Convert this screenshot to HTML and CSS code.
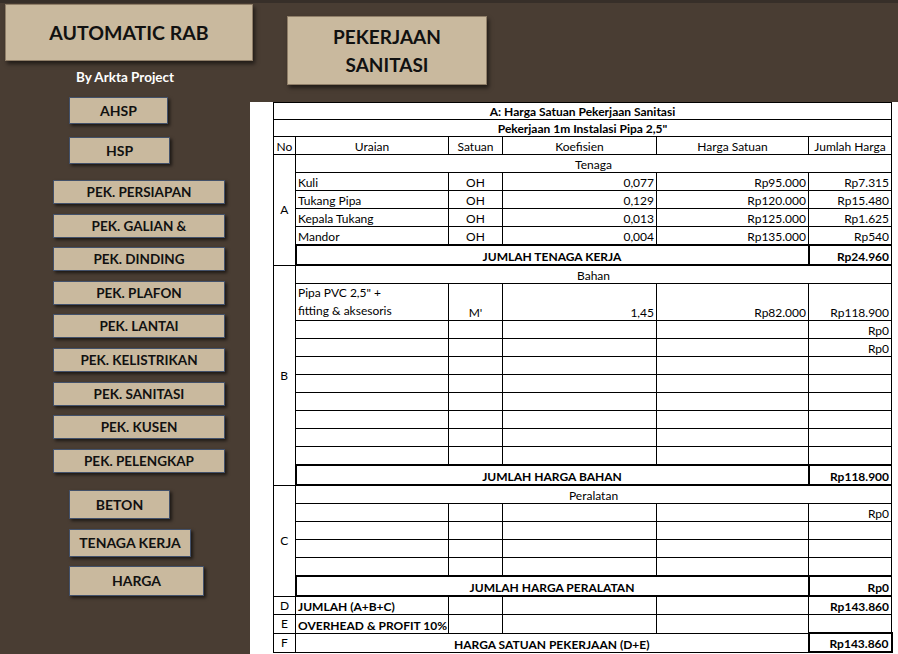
FILE: index.html
```html
<!DOCTYPE html>
<html>
<head>
    <title>Automatic RAB - Pekerjaan Sanitasi</title>
    <link rel="stylesheet" href="styles.css">
</head>
<body>
<div class="app">
    <aside class="sidebar">
        <div class="brand">AUTOMATIC RAB</div>
        <div class="byline">By Arkta Project</div>

        <nav class="menu">
            <div class="group group-data">
                <a class="btn btn-ahsp">AHSP</a>
                <a class="btn btn-hsp">HSP</a>
            </div>
            <div class="group group-pek">
                <a class="btn">PEK. PERSIAPAN</a>
                <a class="btn">PEK. GALIAN &amp;</a>
                <a class="btn">PEK. DINDING</a>
                <a class="btn">PEK. PLAFON</a>
                <a class="btn">PEK. LANTAI</a>
                <a class="btn">PEK. KELISTRIKAN</a>
                <a class="btn">PEK. SANITASI</a>
                <a class="btn">PEK. KUSEN</a>
                <a class="btn">PEK. PELENGKAP</a>
            </div>
            <div class="group group-extra">
                <a class="btn btn-beton">BETON</a>
                <a class="btn btn-tenaga">TENAGA KERJA</a>
                <a class="btn btn-harga">HARGA</a>
            </div>
        </nav>
    </aside>

    <main class="main">
        <header class="main-head">
            <div class="page-title">PEKERJAAN<br>SANITASI</div>
        </header>

        <section class="sheet">
            <table class="rab">
                <colgroup>
                    <col class="c-no">
                    <col class="c-uraian">
                    <col class="c-satuan">
                    <col class="c-koef">
                    <col class="c-harga">
                    <col class="c-jumlah">
                </colgroup>
                <tr><td colspan="6" class="title">A: Harga Satuan Pekerjaan Sanitasi</td></tr>
                <tr><td colspan="6" class="title">Pekerjaan 1m Instalasi Pipa 2,5"</td></tr>
                <tr class="head">
                    <td>No</td><td>Uraian</td><td>Satuan</td><td>Koefisien</td><td>Harga Satuan</td><td>Jumlah Harga</td>
                </tr>

                <!-- A: tenaga -->
                <tr><td rowspan="6" class="no">A</td><td colspan="5" class="group-title">Tenaga</td></tr>
                <tr><td>Kuli</td><td class="c">OH</td><td class="r">0,077</td><td class="r">Rp95.000</td><td class="r">Rp7.315</td></tr>
                <tr><td>Tukang Pipa</td><td class="c">OH</td><td class="r">0,129</td><td class="r">Rp120.000</td><td class="r">Rp15.480</td></tr>
                <tr><td>Kepala Tukang</td><td class="c">OH</td><td class="r">0,013</td><td class="r">Rp125.000</td><td class="r">Rp1.625</td></tr>
                <tr><td>Mandor</td><td class="c">OH</td><td class="r">0,004</td><td class="r">Rp135.000</td><td class="r">Rp540</td></tr>
                <tr class="total"><td colspan="4" class="total-label">JUMLAH TENAGA KERJA</td><td class="r b">Rp24.960</td></tr>

                <!-- B: bahan -->
                <tr><td rowspan="11" class="no">B</td><td colspan="5" class="group-title">Bahan</td></tr>
                <tr class="tall"><td class="wrap">Pipa PVC 2,5" +<br>fitting &amp; aksesoris</td><td class="c">M'</td><td class="r">1,45</td><td class="r">Rp82.000</td><td class="r">Rp118.900</td></tr>
                <tr><td></td><td></td><td></td><td></td><td class="r">Rp0</td></tr>
                <tr><td></td><td></td><td></td><td></td><td class="r">Rp0</td></tr>
                <tr><td></td><td></td><td></td><td></td><td></td></tr>
                <tr><td></td><td></td><td></td><td></td><td></td></tr>
                <tr><td></td><td></td><td></td><td></td><td></td></tr>
                <tr><td></td><td></td><td></td><td></td><td></td></tr>
                <tr><td></td><td></td><td></td><td></td><td></td></tr>
                <tr><td></td><td></td><td></td><td></td><td></td></tr>
                <tr class="total"><td colspan="4" class="total-label">JUMLAH HARGA BAHAN</td><td class="r b">Rp118.900</td></tr>

                <!-- C: peralatan -->
                <tr><td rowspan="6" class="no">C</td><td colspan="5" class="group-title">Peralatan</td></tr>
                <tr><td></td><td></td><td></td><td></td><td class="r">Rp0</td></tr>
                <tr><td></td><td></td><td></td><td></td><td></td></tr>
                <tr><td></td><td></td><td></td><td></td><td></td></tr>
                <tr><td></td><td></td><td></td><td></td><td></td></tr>
                <tr class="total"><td colspan="4" class="total-label">JUMLAH HARGA PERALATAN</td><td class="r b">Rp0</td></tr>

                <tr><td class="no">D</td><td class="b">JUMLAH (A+B+C)</td><td></td><td></td><td></td><td class="r b">Rp143.860</td></tr>
                <tr><td class="no">E</td><td class="b">OVERHEAD &amp; PROFIT 10%</td><td></td><td></td><td></td><td></td></tr>
                <tr><td class="no">F</td><td colspan="4" class="c b">HARGA SATUAN PEKERJAAN (D+E)</td><td class="r b grand">Rp143.860</td></tr>
            </table>
        </section>
    </main>
</div>
</body>
</html>
```

FILE: styles.css
```css
body {
    margin: 0;
    background-color: #493d33;
    border-top: 3px solid #372f29;
    font-family: Lato, "Open Sans", sans-serif;
    color: #111;
    height: 651px;
    overflow: hidden;
}
.app {
    display: grid;
    grid-template-columns: 250px 1fr;
    height: 651px;
}

/* sidebar */
.sidebar {
    display: flex;
    flex-direction: column;
}
.brand {
    margin: 1px 0 0 5px;
    width: 248px;
    height: 57px;
    box-sizing: border-box;
    background-color: #c9b99e;
    border: 1px solid #8f7e68;
    box-shadow: 2px 3px 4px rgba(0, 0, 0, 0.55);
    display: flex;
    align-items: center;
    justify-content: center;
    font-size: 19.5px;
    font-weight: 700;
    position: relative;
    z-index: 1;
}
.byline {
    margin-top: 8px;
    text-align: center;
    color: #fff;
    font-size: 13.5px;
    font-weight: 700;
    line-height: 16px;
}
.menu {
    display: flex;
    flex-direction: column;
}
.group {
    display: flex;
    flex-direction: column;
    align-items: flex-start;
}
.btn {
    display: flex;
    align-items: center;
    justify-content: center;
    box-sizing: border-box;
    background-color: #c9b99e;
    border: 1px solid #43516a;
    box-shadow: 2px 2px 3px rgba(0, 0, 0, 0.6);
    font-size: 14px;
    font-weight: 700;
    color: #111;
    cursor: pointer;
}
.group-data {
    margin: 12px 0 0 69px;
    gap: 13px;
}
.btn-ahsp { width: 99px; height: 27px; }
.btn-hsp { width: 101px; height: 27px; }

.group-pek {
    margin: 16px 0 0 53px;
    gap: 9.6px;
}
.group-pek .btn {
    width: 172px;
    height: 24px;
    font-size: 13.5px;
}
.group-extra {
    margin: 17px 0 0 69px;
}
.btn-beton { width: 101px; height: 29px; }
.btn-tenaga { width: 122px; height: 28px; margin-top: 10px; }
.btn-harga { width: 135px; height: 30px; margin-top: 9px; }

/* main area */
.main {
    display: flex;
    flex-direction: column;
}
.main-head {
    height: 99px;
    flex-shrink: 0;
}
.page-title {
    margin: 13px 0 0 37px;
    width: 200px;
    height: 69px;
    box-sizing: border-box;
    background-color: #c9b99e;
    border: 1px solid #8f7e68;
    box-shadow: 2px 3px 4px rgba(0, 0, 0, 0.55);
    display: flex;
    align-items: center;
    justify-content: center;
    text-align: center;
    font-size: 19px;
    font-weight: 700;
    line-height: 28px;
}
.sheet {
    flex: 1;
    background-color: #fff;
    padding-left: 23px;
}

/* cost table */
.rab {
    border-collapse: collapse;
    table-layout: fixed;
    width: 618px;
    font-size: 12px;
    color: #000;
}
.c-no { width: 22px; }
.c-uraian { width: 153px; }
.c-satuan { width: 54px; }
.c-koef { width: 154px; }
.c-harga { width: 152px; }
.c-jumlah { width: 83px; }

.rab td {
    border: 1px solid #000;
    padding: 0 2px;
    height: 17px;
    line-height: 15px;
    vertical-align: bottom;
    white-space: nowrap;
    overflow: hidden;
}
.rab .title {
    text-align: center;
    font-weight: 700;
    height: 16px;
}
.rab .head td {
    text-align: center;
}
.rab .no {
    text-align: center;
    vertical-align: middle;
    padding: 0;
}
.rab .group-title {
    text-align: center;
}
.rab .tall td {
    height: 35px;
}
.rab .wrap {
    line-height: 18px;
}
.rab .c { text-align: center; }
.rab .r { text-align: right; }
.rab .b { font-weight: 700; }

.rab .total td {
    border-top: 2px solid #000;
    border-bottom: 2px solid #000;
    height: 18px;
    font-weight: 700;
}
.rab .total .total-label {
    text-align: center;
    border-left: 2px solid #000;
    border-right: 2px solid #000;
}
.rab .grand {
    border: 2px solid #000;
}
```
